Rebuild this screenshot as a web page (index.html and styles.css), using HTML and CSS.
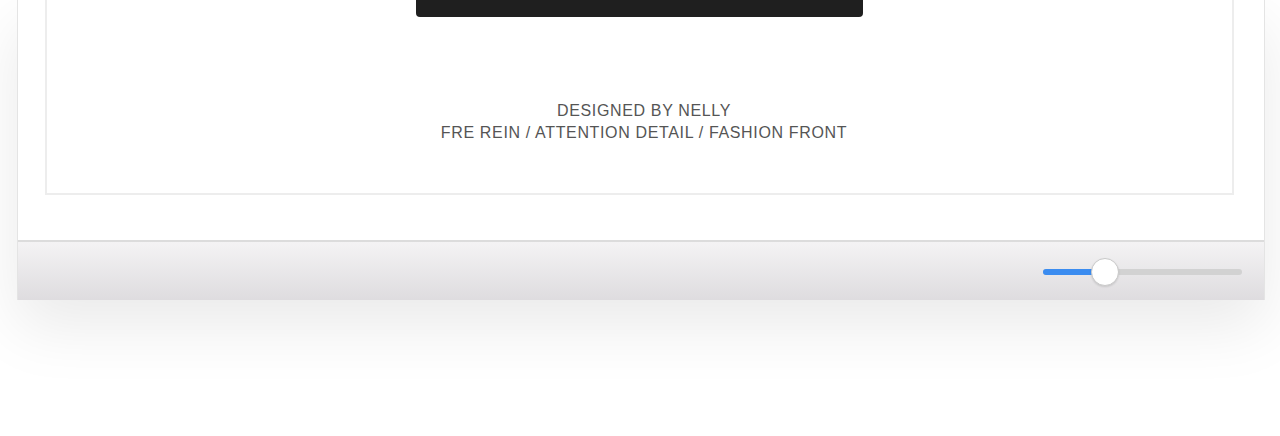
FILE: index.html
```html
<!DOCTYPE html>
<html lang="en">
<head>
    <meta charset="UTF-8">
    <meta name="viewport" content="width=device-width, initial-scale=1.0">
    <title>Designed by Nelly</title>
    <link rel="stylesheet" href="styles.css">
</head>
<body>
    <div class="window">
        <div class="page">
            <div class="frame">
                <div class="cover"></div>
                <p class="credits">
                    DESIGNED BY NELLY<br>
                    FRE REIN / ATTENTION DETAIL / FASHION FRONT
                </p>
            </div>
        </div>
        <div class="toolbar">
            <div class="slider">
                <div class="slider-fill"></div>
                <div class="slider-knob"></div>
            </div>
        </div>
    </div>
</body>
</html>
```

FILE: styles.css
```css
body {
    margin: 0;
    padding: 0;
    background-color: #fff;
    font-family: "Liberation Sans", Arial, sans-serif;
    height: 436px;
    overflow: hidden;
}

.window {
    width: 1246px;
    margin-left: 17px;
    background-color: #fff;
    border-left: 1px solid #e4e4e4;
    border-right: 1px solid #e4e4e4;
    box-shadow: 0 26px 60px rgba(0, 0, 0, 0.085);
}

.page {
    padding: 0 30px 45px 27px;
}

.frame {
    border: 2px solid #ededed;
    border-top: none;
    padding-bottom: 49px;
}

.cover {
    width: 447px;
    height: 17px;
    margin: 0 auto;
    background-color: #1f1f1f;
    border-radius: 0 0 4px 4px;
}

.credits {
    margin: 83px 0 0;
    padding-left: 9px;
    text-align: center;
    font-size: 16px;
    line-height: 22px;
    letter-spacing: 0.65px;
    color: #555;
}

.toolbar {
    height: 58px;
    border-top: 2px solid #dcdcdc;
    background: linear-gradient(to bottom, #f4f3f4, #dedcdf);
    display: flex;
    align-items: center;
    justify-content: flex-end;
    padding-right: 22px;
}

.slider {
    position: relative;
    width: 199px;
    height: 6px;
    border-radius: 3px;
    background-color: #d2d2d2;
    margin-top: 1px;
}

.slider-fill {
    width: 60px;
    height: 6px;
    border-radius: 3px;
    background-color: #3b8cf0;
}

.slider-knob {
    position: absolute;
    left: 48px;
    top: -11px;
    width: 26px;
    height: 26px;
    border-radius: 50%;
    background-color: #fff;
    border: 1px solid #c9c9c9;
    box-shadow: 0 1px 2px rgba(0, 0, 0, 0.12);
}
```
